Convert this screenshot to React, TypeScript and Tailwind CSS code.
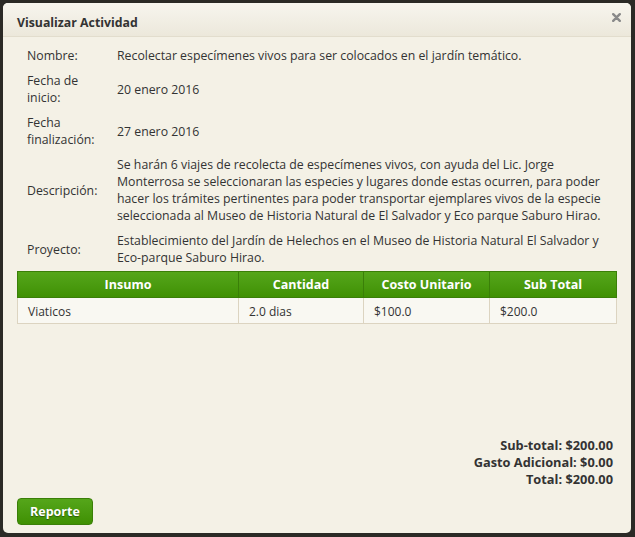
export default function App() {
  const rows: [string, string][] = [
    ["Nombre:", "Recolectar especímenes vivos para ser colocados en el jardín temático."],
    ["Fecha de inicio:", "20 enero 2016"],
    ["Fecha finalización:", "27 enero 2016"],
    [
      "Descripción:",
      "Se harán 6 viajes de recolecta de especímenes vivos, con ayuda del Lic. Jorge Monterrosa se seleccionaran las especies y lugares donde estas ocurren, para poder hacer los trámites pertinentes para poder transportar ejemplares vivos de la especie seleccionada al Museo de Historia Natural de El Salvador y Eco parque Saburo Hirao.",
    ],
    ["Proyecto:", "Establecimiento del Jardín de Helechos en el Museo de Historia Natural El Salvador y Eco-parque Saburo Hirao."],
  ];

  return (
    <div
      className="w-[635px] h-[537px] bg-[#2b2a26] p-[3px] pr-[4px] pb-[4px] text-[12.3px] leading-[17px] text-[#333]"
      style={{ fontFamily: '"Open Sans", "Liberation Sans", sans-serif' }}
    >
      <div className="h-full flex flex-col rounded-[5px] bg-[#f4f1e6] overflow-hidden">
        {/* header */}
        <div className="relative h-[34px] flex items-center pt-[5px] px-[14px] bg-gradient-to-b from-[#f7f5ee] to-[#ece8db] border-b border-[#e2ddcd]">
          <h3 className="font-bold text-[12.3px] text-[#333]">Visualizar Actividad</h3>
          <svg className="absolute right-[10px] top-[10px]" width="9" height="9" viewBox="0 0 9 9">
            <path d="M1.2 1.2 L7.8 7.8 M7.8 1.2 L1.2 7.8" stroke="#8a8a8a" strokeWidth="2.4" strokeLinecap="round" />
          </svg>
        </div>

        {/* body */}
        <div className="flex-1 flex flex-col px-[14px] pt-[6px]">
          <table className="w-full border-collapse">
            <tbody>
              {rows.map(([label, value]) => (
                <tr key={label}>
                  <td className="w-[100px] align-middle px-[10px] py-[4px]">{label}</td>
                  <td className="align-middle py-[4px] pr-[10px]">{value}</td>
                </tr>
              ))}
            </tbody>
          </table>

          <table className="w-full border-collapse mt-[1px] text-[12px]">
            <thead>
              <tr className="bg-gradient-to-b from-[#55a61a] to-[#3f9002] text-white">
                <th className="w-[221px] h-[26px] border border-[#3a7f08] font-bold text-[12.5px]">Insumo</th>
                <th className="w-[125px] border border-[#3a7f08] font-bold text-[12.5px]">Cantidad</th>
                <th className="w-[126px] border border-[#3a7f08] font-bold text-[12.5px]">Costo Unitario</th>
                <th className="border border-[#3a7f08] font-bold text-[12.5px]">Sub Total</th>
              </tr>
            </thead>
            <tbody>
              <tr className="bg-[#f9f8f2]">
                <td className="h-[26px] border border-[#dcd4c1] px-[10px] pt-[1px]">Viaticos</td>
                <td className="border border-[#dcd4c1] px-[10px] pt-[1px]">2.0 dias</td>
                <td className="border border-[#dcd4c1] px-[10px] pt-[1px]">$100.0</td>
                <td className="border border-[#dcd4c1] px-[10px] pt-[1px]">$200.0</td>
              </tr>
            </tbody>
          </table>

          <div className="flex-1" />

          <div className="text-right font-bold text-[12.8px] text-[#333] pr-[4px]">
            <p>Sub-total: $200.00</p>
            <p>Gasto Adicional: $0.00</p>
            <p>Total: $200.00</p>
          </div>

          <div className="pt-[10px] pb-[8px]">
            <button className="h-[27px] px-[12px] rounded-[4px] border border-[#3a7f08] bg-gradient-to-b from-[#55a61a] to-[#3f9002] text-white font-bold text-[12.5px] [text-shadow:0_1px_1px_rgba(0,0,0,0.4)]">
              Reporte
            </button>
          </div>
        </div>
      </div>
    </div>
  );
}
